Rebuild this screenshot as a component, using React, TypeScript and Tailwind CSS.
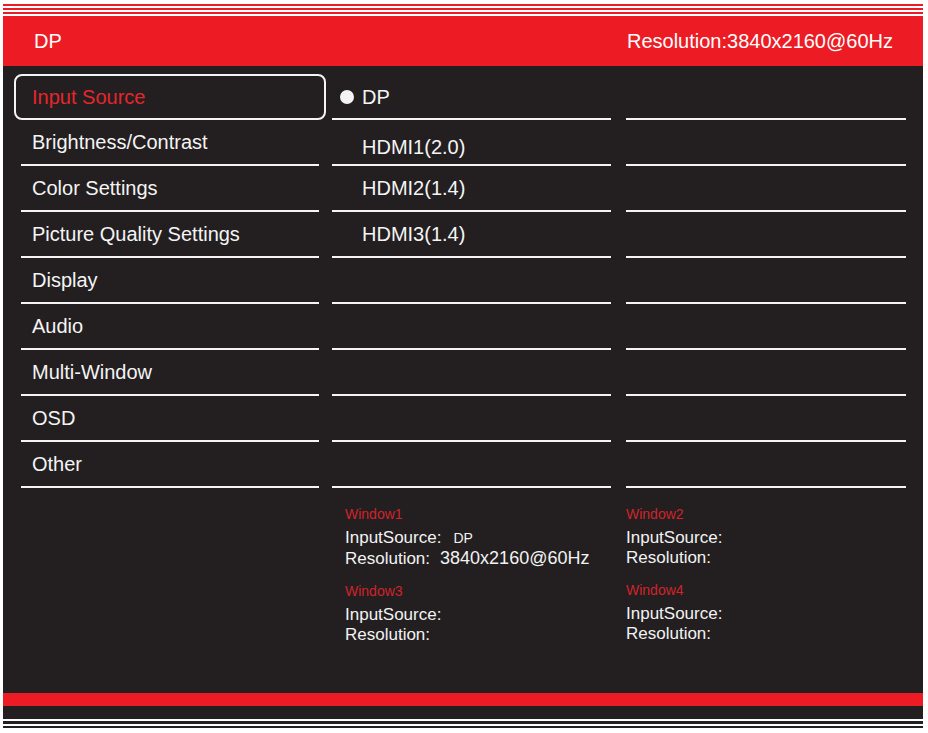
import React from "react";

const menuItems = [
    "Brightness/Contrast",
    "Color Settings",
    "Picture Quality Settings",
    "Display",
    "Audio",
    "Multi-Window",
    "OSD",
    "Other",
];

type WindowInfoProps = {
    first: string;
    second: string;
    firstSource?: string;
    firstResolution?: string;
};

const WindowInfo = ({ first, second, firstSource, firstResolution }: WindowInfoProps) => {
    return (
        <div className="flex flex-col">
            <div className="mt-[18px] text-[14px] leading-[16px] text-[#d0232a]">{first}</div>
            <div className="mt-[6px] flex items-baseline text-[17px] leading-[20px] text-[#f2f2f2]">
                <span>InputSource:</span>
                {firstSource && <span className="ml-[12px] text-[14px]">{firstSource}</span>}
            </div>
            <div className="flex items-baseline text-[17px] leading-[20px] text-[#f2f2f2]">
                <span>Resolution:</span>
                {firstResolution && <span className="ml-[10px] text-[18px]">{firstResolution}</span>}
            </div>
            <div className="mt-[14px] text-[14px] leading-[16px] text-[#d0232a]">{second}</div>
            <div className="mt-[6px] text-[17px] leading-[20px] text-[#f2f2f2]">InputSource:</div>
            <div className="text-[17px] leading-[20px] text-[#f2f2f2]">Resolution:</div>
        </div>
    );
};

const App = () => {
    const emptyRows = Array.from({ length: 9 });

    return (
        <div className="flex h-[733px] w-[928px] flex-col overflow-hidden bg-white font-['Liberation_Sans',Arial,sans-serif]">
            <div className="ml-[3px] flex w-[920px] flex-col">
                {/* top stripes */}
                <div className="h-[4px]" />
                <div className="h-[2px] bg-[#ed1c24]" />
                <div className="h-[2px]" />
                <div className="h-[2px] bg-[#ed1c24]" />
                <div className="h-[2px]" />
                <div className="h-[2px] bg-[#ed1c24]" />
                <div className="h-[2px]" />

                {/* header */}
                <div className="flex h-[50px] items-center justify-between bg-[#ed1c24] pl-[31px] pr-[30px] text-[20px] text-white">
                    <span>DP</span>
                    <span>Resolution:3840x2160@60Hz</span>
                </div>

                {/* body */}
                <div className="flex h-[627px] bg-[#231f20] text-[20px] text-[#f4f4f4]">
                    <div className="flex w-[329px] flex-col pl-[11px] pt-[8px]">
                        <div className="flex h-[46px] w-[312px] items-center rounded-[8px] border-2 border-[#f4f4f4] pl-[16px] text-[#e4262d]">
                            Input Source
                        </div>
                        {menuItems.map((item) => (
                            <div
                                key={item}
                                className="ml-[7px] flex h-[46px] w-[298px] items-center border-b-2 border-[#f4f4f4] pl-[11px]"
                            >
                                {item}
                            </div>
                        ))}
                    </div>

                    <div className="flex w-[279px] flex-col pt-[8px]">
                        <div className="flex h-[46px] items-center gap-[8px] border-b-2 border-[#f4f4f4] pl-[8px] pt-[1px]">
                            <span className="h-[14px] w-[14px] rounded-full bg-[#f4f4f4]" />
                            <span>DP</span>
                        </div>
                        <div className="flex h-[46px] items-center border-b-2 border-[#f4f4f4] pl-[30px] pt-[10px]">
                            HDMI1(2.0)
                        </div>
                        <div className="flex h-[46px] items-center border-b-2 border-[#f4f4f4] pl-[30px]">
                            HDMI2(1.4)
                        </div>
                        <div className="flex h-[46px] items-center border-b-2 border-[#f4f4f4] pl-[30px]">
                            HDMI3(1.4)
                        </div>
                        {emptyRows.slice(4).map((_, i) => (
                            <div key={i} className="h-[46px] border-b-2 border-[#f4f4f4]" />
                        ))}
                        <div className="pl-[13px]">
                            <WindowInfo
                                first="Window1"
                                second="Window3"
                                firstSource="DP"
                                firstResolution="3840x2160@60Hz"
                            />
                        </div>
                    </div>

                    <div className="ml-[15px] flex w-[280px] flex-col pt-[8px]">
                        {emptyRows.map((_, i) => (
                            <div key={i} className="h-[46px] border-b-2 border-[#f4f4f4]" />
                        ))}
                        <WindowInfo first="Window2" second="Window4" />
                    </div>
                </div>

                {/* footer */}
                <div className="h-[13px] bg-[#ed1c24]" />
                <div className="h-[13px] bg-[#231f20]" />
                <div className="h-[2px]" />
                <div className="h-[3px] bg-[#231f20]" />
                <div className="h-[2px]" />
                <div className="h-[2px] bg-[#231f20]" />
            </div>
        </div>
    );
};

export default App;
